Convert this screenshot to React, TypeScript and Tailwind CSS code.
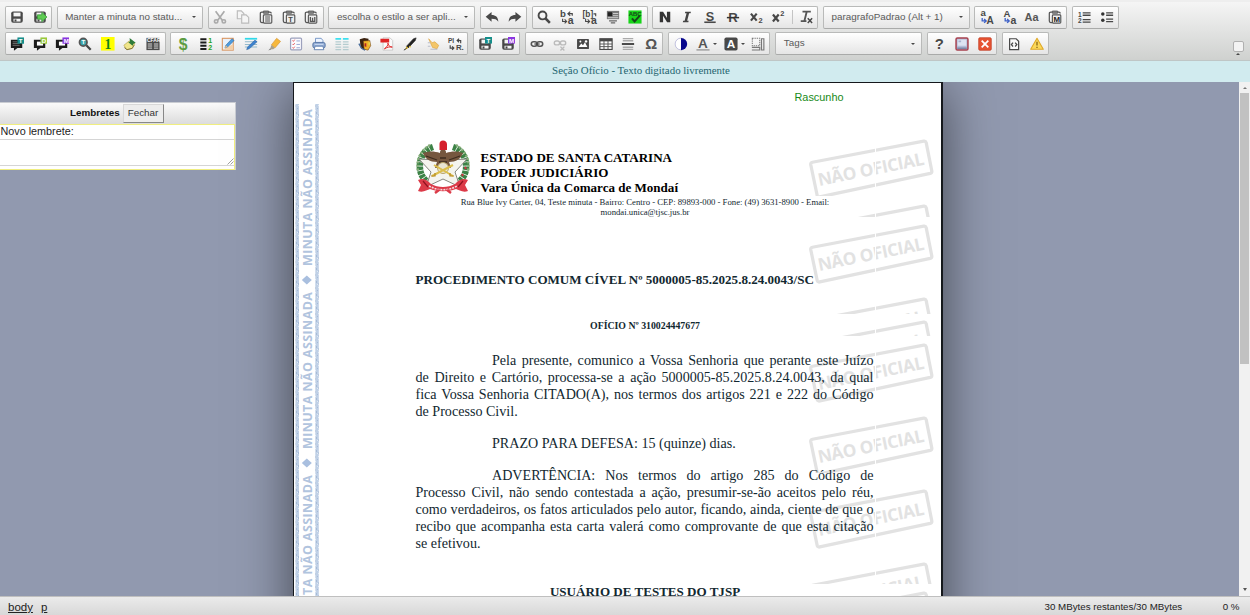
import React from "react";

type Kids = { children?: React.ReactNode };

const Icon = ({ children }: Kids) => (
  <svg viewBox="0 0 16 16" className="h-3.5 w-3.5 shrink-0 overflow-visible" fill="none">
    {children}
  </svg>
);

const T = ({ x, y, s = 9, f = "#484848", serif, children }: Kids & { x: number; y: number; s?: number; f?: string; serif?: boolean }) => (
  <text x={x} y={y} fontSize={s} fill={f} fontWeight="bold" fontFamily={serif ? "Liberation Serif, serif" : "Liberation Sans, sans-serif"}>
    {children}
  </text>
);

const Floppy = () => (
  <>
    <rect x="1.4" y="1.6" width="13.2" height="13" rx="2.2" fill="#484848" />
    <path d="M4 3h8v4.3H4z" fill="#f4f4f4" />
    <path d="M4 10h8v3.2H4z" fill="#f4f4f4" />
    <path d="M5.2 10.8h2.2v2.4H5.200z" fill="#484848" />
  </>
);

const Board = ({ children }: Kids) => (
  <>
    <path d="M5 2.5H3.2Q1.500 2.500 1.500 4v8.700q0 1.600 1.600 1.600H5M11 2.500h1.500Q14 2.500 14 4" stroke="#555" strokeWidth="1.400" />
    <path d="M5 1.200h6v2.500H5z" stroke="#555" fill="#888" />
    <rect x="5" y="5.500" width="9.600" height="9.500" rx="1" stroke="#555" strokeWidth="1.300" fill="#eee" />
    {children}
  </>
);

const Speech = ({ c, l, solid }: { c: string; l: string; solid?: boolean }) => (
  <>
    <path d="M1 3h13v9.500H8.500L4.500 15.800v-3.300H1z" fill="#1c1c1c" />
    {solid ? <path d="M3 5.500h5M3 7.500h8M3 9.500h8" stroke="#777" /> : <path d="M4.500 5.300h7v4.500h-7z" fill="#fff" />}
    <rect x="8.500" y="0.500" width="7.500" height="7.200" fill={c} />
    <T x={9.900} y={6.800} s={7} f="#fff">{l}</T>
  </>
);

const Swap = ({ a, b }: { a: string; b: string }) => (
  <>
    <T x={0} y={8.500} s={11}>{a}</T>
    <T x={8.800} y={15.500} s={12}>{b}</T>
    <path d="M14 6.500V4.200H9.500M11.700 1.800L9 4.200l2.700 2.400" stroke="#484848" strokeWidth="1.300" />
    <path d="M3 10v3.200h4M5.300 10.800l2.200 2.200-2.200 2.200" stroke="#484848" strokeWidth="1.300" />
  </>
);

const BlueArrow = () => <path d="M2.500 9v3.500h4M4.700 10.300l2.400 2.200-2.400 2.200" stroke="#3f62c8" strokeWidth="1.500" />;

const icons: Record<string, React.ReactNode> = {
  save: <Floppy />,
  saveExit: (
    <>
      <Floppy />
      <path d="M5 5.500h5V2.500l6 5.500-6 5.500v-3H5z" fill="#5ecb52" stroke="#319233" strokeWidth="0.800" />
    </>
  ),
  cut: (
    <g stroke="#aaa" strokeWidth="1.900">
      <path d="M3 1.500l7.800 10.500M13 1.500L5.200 12" />
      <circle cx="3.600" cy="13" r="1.900" />
      <circle cx="12.400" cy="13" r="1.900" />
    </g>
  ),
  copy: (
    <g stroke="#bbb" strokeWidth="1.300" fill="#f5f5f5">
      <path d="M1.500 1H6l3 3v6H1.500z" />
      <path d="M6.500 5.500H11.500l3 3V15h-8z" />
    </g>
  ),
  paste: <Board><path d="M7 8h5.700M7 10.300h5.700M7 12.600h5.700" stroke="#555" strokeWidth="1.200" /></Board>,
  pasteText: <Board><T x={7.100} y={13.500} s={8.500}>T</T></Board>,
  pasteWord: <Board><path d="M7.300 8v5h5V8M9.800 8.800v3.600" stroke="#555" strokeWidth="1.500" /></Board>,
  undo: <path d="M0.800 7.800L7.500 2.200v3.500c4.700.1 7.500 2.200 7.700 7.700-1.800-2.700-3.900-3.400-7.700-3.400v3.500z" fill="#484848" />,
  redo: <path d="M15.200 7.800L8.500 2.200v3.500C3.800 5.800 1 7.900.8 13.400c1.800-2.700 3.900-3.400 7.700-3.400v3.500z" fill="#484848" />,
  find: (
    <>
      <circle cx="6.300" cy="6.200" r="4.500" stroke="#484848" strokeWidth="2.200" />
      <path d="M9.800 9.700l4.900 4.900" stroke="#484848" strokeWidth="2.900" />
    </>
  ),
  replace: <Swap a="b" b="a" />,
  replaceAll: (
    <>
      <T x={-0.500} y={8.500} s={9.500}>[b]</T>
      <T x={9} y={15.500} s={12}>a</T>
      <path d="M3 10v3.200h4M5.300 10.800l2.200 2.200-2.200 2.200M14.500 7V4.500H12" stroke="#484848" strokeWidth="1.300" />
    </>
  ),
  selectAll: (
    <>
      <path d="M1 1h14v9.500H1z" fill="#777" />
      <path d="M2 2.500h5v4.500H2z" fill="#222" />
      <path d="M8 4h6M8 6.500h6M2 8.800h12" stroke="#eee" strokeWidth="0.800" />
      <path d="M3.500 12.500h9M5.500 14.700h5" stroke="#666" strokeWidth="1.300" />
    </>
  ),
  spell: (
    <>
      <rect x="0.500" y="0.500" width="15" height="15" fill="#17d419" />
      <T x={0.900} y={7} s={6.800} f="#17461b">ABC</T>
      <path d="M4.500 9.500l3 3.500 6-6.500" stroke="#17461b" strokeWidth="2.300" />
    </>
  ),
  bold: <path d="M2 14V2h3.800l4.400 7.200V2H14v12h-3.600L5.800 6.700V14z" fill="#333" />,
  italic: <path d="M6 2h6.500l-.4 1.700h-1.700L8.200 12.300h1.700L9.500 14H3.200l.4-1.700h1.700l2.200-8.600H5.600z" fill="#444" />,
  underline: (
    <>
      <T x={3} y={12} s={14.500}>S</T>
      <path d="M1.500 14h13" stroke="#484848" strokeWidth="1.800" />
    </>
  ),
  strike: (
    <>
      <T x={2.700} y={13.700} s={15}>R</T>
      <path d="M1 8.700h14" stroke="#333" strokeWidth="1.700" />
    </>
  ),
  sub: (
    <>
      <path d="M2.200 4.200l6.600 8M8.800 4.200l-6.600 8" stroke="#484848" strokeWidth="2.500" />
      <T x={10.800} y={15} s={8.500}>2</T>
    </>
  ),
  sup: (
    <>
      <path d="M2.200 5.200l6.600 8M8.800 5.200l-6.600 8" stroke="#484848" strokeWidth="2.500" />
      <T x={10.500} y={7} s={8.500}>2</T>
    </>
  ),
  clear: (
    <>
      <path d="M4 1.800h9.500M8.800 2L6.300 12M2 12.800h6.500" stroke="#555" strokeWidth="2.100" />
      <path d="M10 9.500l5 5.300M15 9.500l-5 5.300" stroke="#484848" strokeWidth="1.700" />
    </>
  ),
  lowUp: <><T x={0.500} y={7} s={11}>a</T><T x={7.500} y={15.500} s={11.500}>A</T><BlueArrow /></>,
  upLow: <><T x={0.500} y={8} s={11}>A</T><T x={8.500} y={15.500} s={12}>a</T><BlueArrow /></>,
  cap: <T x={-0.500} y={12} s={12.500} f="#555">Aa</T>,
  pasteM: <Board><T x={6.200} y={13.700} s={9} f="#222">M</T></Board>,
  ol: (
    <>
      <T x={1} y={7.500} s={7.500}>1</T>
      <T x={1} y={15.300} s={7.500}>2</T>
      <path d="M6.500 3.200h9M6.500 6h9M6.500 11h9M6.500 13.800h9" stroke="#484848" strokeWidth="1.500" />
    </>
  ),
  ul: (
    <>
      <circle cx="3.200" cy="4.500" r="2" fill="#333" />
      <circle cx="3.200" cy="11.700" r="2" fill="#333" />
      <path d="M7 3.300h8M7 6h8M7 10.500h8M7 13.200h8" stroke="#484848" strokeWidth="1.500" />
    </>
  ),
  noteT: <Speech c="#168e8a" l="T" solid />,
  noteD: <Speech c="#98c93c" l="D" />,
  noteM: <Speech c="#8a35e0" l="M" />,
  lens: (
    <>
      <circle cx="6" cy="6" r="4.300" fill="#3aa6ad" stroke="#555" strokeWidth="2" />
      <path d="M9.500 9.500l5 5" stroke="#444" strokeWidth="2.600" />
      <T x={4} y={8.500} s={7} f="#fff">T</T>
    </>
  ),
  one: <><rect width="15.500" height="15.500" fill="#ff0" /><T x={4} y={13.700} s={15.500} f="#13851a" serif>1</T></>,
  pin: (
    <>
      <path d="M1 9.500L7 4.500l6.500 2.500-3 6L4.500 14.500z" fill="#f0e58a" stroke="#b8a64a" strokeWidth="0.800" />
      <path d="M1.500 12l3 2.500 6-1.500 2.500-4" stroke="#7a6b30" />
      <path d="M7.500 1l7 5.500-2.500 1.200-1 2.300L6 6l2-1z" fill="#2d7a3a" />
    </>
  ),
  card: (
    <>
      <path d="M0.500 1h15v14h-15z" fill="#4a4a4a" />
      <T x={1} y={6} s={5.800} f="#fff">CFAR</T>
      <path d="M2 8h5M2 10.300h5M2 12.700h5M9 8h5M9 10.300h5M9 12.700h5" stroke="#ddd" strokeWidth="1.100" />
    </>
  ),
  money: <T x={3} y={14.300} s={18} f="#5d9c43">$</T>,
  nums: (
    <>
      <path d="M1.500 1.500h7v2.200h-7zM1.500 5.200h7v2.200h-7zM1.500 8.900h7v2.200h-7zM1.500 12.600h7v2.200h-7z" fill="#1c1c1c" />
      <T x={10.500} y={7} s={8} f="#23a321">1</T>
      <T x={10.500} y={15} s={8} f="#23a321">2</T>
    </>
  ),
  edit: (
    <>
      <rect x="1.500" y="1.500" width="12.500" height="13.500" fill="#e8f1fa" stroke="#d9935c" strokeWidth="1.200" />
      <path d="M2 14.500h12V8z" fill="#f3cfa8" />
      <path d="M4.500 12.500l1-3 7-7.500 2.500 2-7.500 7.500z" fill="#4b9be0" stroke="#2b5f94" strokeWidth="0.600" />
      <path d="M4.500 12.500l1-3 2 2z" fill="#f3c080" />
    </>
  ),
  editLines: (
    <>
      <path d="M1 2h14" stroke="#30d8e8" strokeWidth="2" />
      <path d="M1 5.500h14M1 8.500h14M1 11.500h14" stroke="#92b9cc" strokeWidth="1.200" />
      <path d="M3 14.500l1-3 8.500-8 2.500 2-9 8z" fill="#3c82cf" stroke="#2b5f94" strokeWidth="0.500" />
    </>
  ),
  marker: (
    <>
      <path d="M5 9l6-7.500 4.500 3.500-6.500 7.500z" fill="#f6b83c" stroke="#d29331" strokeWidth="0.700" />
      <path d="M5 9l4 3.500-2 1.500H3.500z" fill="#a8a08c" />
      <path d="M3.500 13l1.500 1-3.500 1.500z" fill="#777" />
    </>
  ),
  checks: (
    <>
      <rect x="1.800" y="1.200" width="12.500" height="13.500" rx="1.200" fill="#fbfbff" stroke="#9ca1bd" strokeWidth="1.400" />
      <path d="M4 4l1 1 1.500-2M4 8l1 1 1.500-2M4 12l1 1 1.500-2" stroke="#e0474b" />
      <path d="M8.500 4.500h4M8.500 8.500h4M8.500 12.300h4" stroke="#8c9cce" />
    </>
  ),
  print: (
    <>
      <path d="M4 6V1.500h6.500L12.500 4v3" fill="#eef5ff" stroke="#6d8fc2" />
      <rect x="1" y="6.200" width="14" height="6.300" rx="2" fill="#93acd4" stroke="#4c6d9f" />
      <path d="M3.500 10.500h9l1 4h-11z" fill="#fff" stroke="#5a7cad" />
      <path d="M3 8.500h10" stroke="#cfdff5" />
    </>
  ),
  columns: (
    <>
      <path d="M0.500 2h6.500M9 2h6.500" stroke="#3de0ef" strokeWidth="2" />
      <path d="M0.500 5.500h6.500M9 5.500h6.500M0.500 8.500h6.500M9 8.500h6.500M0.500 11.500h6.500M9 11.500h6.500M0.500 14.500h6.500M9 14.500h6.500" stroke="#b4cccf" strokeWidth="1.300" />
    </>
  ),
  mask: (
    <>
      <path d="M2 2.500l5-1.500 5 1v10l-5 3-4-3z" fill="#3b2310" />
      <path d="M6 4.500l7.500-.5 1 6-3 5-4.500-1z" fill="#f0b32a" stroke="#5d3414" strokeWidth="0.600" />
      <path d="M7.500 7h2v4.500l-2-1z" fill="#b32222" />
      <path d="M12 6h1.800v3H12z" fill="#e4d94a" />
      <path d="M1 7.500l3 5.500 4 2" stroke="#4a6d9b" strokeWidth="1.500" />
    </>
  ),
  pdf: (
    <>
      <path d="M3.500 1h8l3 3v11h-11z" fill="#fafafa" stroke="#bbb" strokeWidth="0.800" />
      <rect x="0.500" y="2" width="10" height="4.300" fill="#df2527" />
      <path d="M5 13.500c3-2 4.500-4.500 4-6.500 1 3.500 2.500 4.500 5 4.500-3-.7-6 .3-9 2z" stroke="#df2527" strokeWidth="1.100" />
    </>
  ),
  pen: (
    <>
      <path d="M4 10.500l8-8.500 3-1-1 3-8 8.500z" fill="#222" stroke="#222" strokeWidth="0.700" />
      <path d="M4 10.500l2 2-3.500 2z" fill="#d6ad1a" />
      <path d="M7 10.500l2 1" stroke="#e4c12f" strokeWidth="1.200" />
      <path d="M1 15l3-2" stroke="#222" />
    </>
  ),
  hand: (
    <>
      <path d="M3 2l4 4.500 3-1 4.500 4-2 4-5-1.500z" fill="#f3c66a" stroke="#dba03a" strokeWidth="0.700" />
      <path d="M2 6.500h3M2 10.500h3M5 14h8" stroke="#b9bdc9" strokeWidth="1.200" />
    </>
  ),
  pr: (
    <>
      <T x={0} y={7} s={7.500}>PI</T>
      <T x={9} y={15.300} s={9}>R.</T>
      <path d="M14.500 7V4H11M2.500 9.500v3.200h4M4.700 10.700l2 2-2 2M12.700 2L10.500 4l2.200 2" stroke="#444" strokeWidth="1.300" />
    </>
  ),
  saveT: <><Floppy /><rect x="8" y="0" width="8" height="7.500" fill="#168e8a" /><T x={9.800} y={6.500} s={7} f="#fff">T</T></>,
  saveM: <><Floppy /><rect x="8" y="0" width="8" height="7.500" fill="#8a35e0" /><T x={9.200} y={6.500} s={7} f="#fff">M</T></>,
  link: (
    <>
      <rect x="1.500" y="5.500" width="6.500" height="5" rx="2.500" stroke="#555" strokeWidth="1.800" />
      <rect x="8" y="5.500" width="6.500" height="5" rx="2.500" stroke="#555" strokeWidth="1.800" />
      <path d="M5 8h6" stroke="#444" strokeWidth="1.400" />
    </>
  ),
  unlink: (
    <g stroke="#bbb" strokeWidth="1.600">
      <rect x="1.500" y="4.500" width="6" height="4.500" rx="2.200" />
      <rect x="8.500" y="4.500" width="6" height="4.500" rx="2.200" />
      <path d="M8.500 11l4.500 4.500M13 11l-4.500 4.500" />
    </g>
  ),
  image: (
    <>
      <rect x="1.200" y="2.200" width="13.600" height="11.600" rx="1" fill="#484848" />
      <path d="M3 11.500l3-4 2 2 2.200-3.500L13 11.500z" fill="#fff" />
      <circle cx="5" cy="5.200" r="1.100" fill="#fff" />
      <circle cx="11.500" cy="5" r="1.400" fill="#fff" />
    </>
  ),
  table: (
    <>
      <rect x="1" y="2" width="14" height="12.200" fill="#fff" stroke="#484848" strokeWidth="1.300" />
      <path d="M1 2h14v3H1z" fill="#484848" />
      <path d="M1 8h14M1 11h14M5.700 4v10M10.300 4v10" stroke="#555" strokeWidth="1.100" />
    </>
  ),
  rule: (
    <>
      <path d="M2 1.800h12M2 4.300h12M2 11.700h12M2 14.200h12" stroke="#aaa" strokeWidth="1.500" />
      <path d="M1 8h14" stroke="#333" strokeWidth="2" />
    </>
  ),
  omega: <T x={1.500} y={14} s={17} f="#555">Ω</T>,
  contrast: (
    <>
      <circle cx="8" cy="8" r="6.700" fill="#fff" stroke="#9c9ccc" strokeWidth="0.700" />
      <path d="M8 1a7 7 0 010 14z" fill="#07078c" />
    </>
  ),
  color: <><T x={2.300} y={12} s={15.500} f="#555">A</T><path d="M0.500 14.700h15" stroke="#aaa" strokeWidth="2" /></>,
  bgColor: <><rect x="0.500" y="0.500" width="15" height="15" rx="2" fill="#484848" /><T x={3.200} y={12.900} s={13.500} f="#fff">A</T></>,
  blocks: (
    <>
      <rect x="1.500" y="1.500" width="8.500" height="8.500" stroke="#777" strokeWidth="1.200" strokeDasharray="1.500 1" />
      <path d="M1 11.800h9v3H1M12 2h2.700v12.800H12z" stroke="#777" strokeWidth="1.300" />
    </>
  ),
  help: <T x={3} y={14} s={17}>?</T>,
  preview: (
    <>
      <rect x="1.200" y="1.200" width="13.600" height="13.600" rx="1.500" fill="#b4bdd8" stroke="#a8404e" strokeWidth="1.700" />
      <path d="M3 3h10v7H3z" fill="#dde3f2" />
      <path d="M2.500 12.800h11" stroke="#75809f" strokeWidth="1.500" />
      <path d="M4 4h3v2H4z" fill="#a8b3d0" />
    </>
  ),
  close: (
    <>
      <rect x="0.800" y="0.800" width="14.400" height="14.400" rx="1.500" fill="#e65332" stroke="#c23c22" strokeWidth="0.800" />
      <path d="M4.200 4.200l7.600 7.600M11.800 4.200l-7.600 7.600" stroke="#fff" strokeWidth="2" />
    </>
  ),
  source: (
    <>
      <path d="M3 2h7.500l2.800 2.800V14.500H3z" stroke="#484848" strokeWidth="1.400" fill="#fafafa" />
      <path d="M6.900 6.500L5 8.700l1.900 2.200M9.300 6.500l1.900 2.200-1.900 2.200" stroke="#484848" strokeWidth="1.500" />
    </>
  ),
  warn: (
    <>
      <path d="M8 1.500L15.200 14H.8z" fill="#fbd85a" stroke="#dfa827" strokeWidth="1.200" strokeLinejoin="round" />
      <path d="M8 5.500v4.300M8 11v1.600" stroke="#8a6818" strokeWidth="1.500" />
    </>
  ),
};

const Caret = () => <span className="h-0 w-0 shrink-0 border-x-2 border-t-2 border-x-transparent border-t-[#474747]" />;

const box = "flex h-full shrink-0 items-center rounded-[2px] border border-[#b9bab9] border-b-[#a9aaa9] bg-linear-to-b from-white to-[#e5e5e5]";

const Group = ({ names }: { names: string[] }) => (
  <div className={box}>
    {names.map((n) =>
      n === "|" ? (
        <span key={n} className="mx-[2px] h-3.5 w-px bg-[#c4c4c4]" />
      ) : (
        <button
          key={n}
          aria-label={n}
          className={n === "color" || n === "bgColor" ? "flex w-[27.400px] items-center gap-[3px] pl-[4.500px]" : "flex w-[22.720px] justify-center"}
        >
          <Icon>{icons[n]}</Icon>
          {(n === "color" || n === "bgColor") && <Caret />}
        </button>
      ),
    )}
  </div>
);

const Combo = ({ label }: { label: string }) => (
  <div className={box + " w-[146.800px] justify-between pr-[6px] pl-[7.500px] text-[9.850px] whitespace-nowrap text-[#5a5a5a]"}>
    <span>{label}</span>
    <Caret />
  </div>
);

const Stamp = ({ top, h }: { top: number; h: number }) => (
  <svg className="absolute left-[514px] w-[128px]" style={{ top, height: h }} viewBox={`0 0 128 ${h}`}>
    <path transform="scale(0.985 0.990)" d="M4.500 23.500L117.500 2.200q2-.3 2.500 1.500l5.700 28.600q.3 2-1.600 2.500L12 58.500q-2.200.4-2.700-1.500L2.800 26q-.3-2 1.700-2.500z" fill="none" stroke="#e2e2e2" strokeWidth="3.300" />
    <text transform="translate(11.200 47) rotate(-11.500)" fontFamily="Open Sans, sans-serif" fontWeight="bold" fontSize="17.300" fill="#e2e2e2" textLength="108" lengthAdjust="spacing">
      NÃO OFICIAL
    </text>
    <path d="M67.500 0v60" stroke="#fff" strokeWidth="1" />
  </svg>
);

const stamps = [
  [139, 57], [204, 13], [224, 61], [297, 17], [320, 16], [342.700, 61], [416, 57], [489, 61], [562, 22], [591, 5],
];

const SideBand = () => (
  <svg className="absolute top-[21px] left-px h-[493px] w-[26px]" viewBox="0 0 26 493">
    <defs>
      <pattern id="grain" width="4" height="13" patternUnits="userSpaceOnUse">
        <rect width="4" height="13" fill="#bfd0e6" />
        <path d="M0 1h1v2H0zM2 4h1v1H2zM1 8h1v2H1zM3 10h1v2H3z" fill="#a6bad6" />
        <path d="M3 1h1v1H3zM0 6h1v1H0zM2 11h1v1H2z" fill="#e2eaf3" />
      </pattern>
    </defs>
    <rect x="0.500" width="3.500" height="493" fill="url(#grain)" />
    <rect x="20.300" width="3.500" height="493" fill="url(#grain)" />
    {[0, 183, 366].map((y) => (
      <g key={y} transform={`translate(0 ${y})`}>
        <text transform="translate(16.500 162) rotate(-90)" fontFamily="Open Sans, sans-serif" fontWeight="bold" fontSize="12.500" fill="#b1c4de" textLength="157">
          MINUTA NÃO ASSINADA
        </text>
        <path d="M11.800 171.500l5 4.500-5 4.500-5-4.500z" fill="#a9bfdf" />
      </g>
    ))}
  </svg>
);

const Crest = () => (
  <svg viewBox="0 0 54 54" className="h-[54px] w-[54px] shrink-0" fill="none">
    <path d="M17 7C8 10 3 18 4 29c1 7 4 10 8 14M37 7c9 3 14 11 13 22-1 7-4 10-8 14" stroke="#3c8246" strokeWidth="6.500" strokeDasharray="3.500 0.700" />
    <path d="M14 5C4 11 0 20 2 31M40 5c10 6 14 15 12 26" stroke="#86ad78" strokeWidth="2.400" strokeDasharray="2 1.500" />
    <path d="M46 21l1 2M49 27l1 2M46 34l1 2M42 12l1 2" stroke="#cf3340" strokeWidth="2" />
    <path d="M27 7l6 13 18-1-12 13 5 15-17-8-17 8 5-15L3 19l18 1z" fill="#f4f4ee" stroke="#85877f" strokeWidth="1" />
    <path d="M27 9c-2 0-3 2-3 4-6-2-11-2-17 0 2 6 7 9 14 9l-2 6h16l-2-6c7 0 12-3 14-9-6-2-11-2-17 0 0-2-1-4-3-4z" fill="#76573f" />
    <path d="M10 16l11 4M44 16l-11 4M24 18h6M23 22h8" stroke="#3e2d20" strokeWidth="1.300" />
    <path d="M23.500 10V4q0-3.500 3.500-3.500T31 4v6z" fill="#d51f2c" />
    <circle cx="27" cy="28" r="5.500" fill="#e9e5d2" stroke="#b9a468" />
    <path d="M16 36l21-11M18 25l19 11" stroke="#dcbf4c" strokeWidth="2" />
    <path d="M15 36h4v-3M38 36h-4v-3" stroke="#b58a20" strokeWidth="1.200" />
    <path d="M2 40c6-3 10 1 13 4 7 4 17 4 24 0 3-3 7-7 13-4l-3 5 3 6c-5 2-9-1-12-2-8 3-18 3-26 0-3 1-7 4-12 2l3-6z" fill="#dc3a48" />
    <path d="M13 46c9 5 19 5 28 0" stroke="#f6dadd" strokeWidth="1.600" strokeDasharray="2 1" />
    <path d="M7 41l5 6M47 41l-5 6" stroke="#8f1420" strokeWidth="1.200" />
    <path d="M23 50l-4 3M31 50l4 3" stroke="#dc3a48" strokeWidth="2.400" />
  </svg>
);

const Lines = ({ lines }: { lines: string[] }) => (
  <p>
    {lines.map((l, i) => (
      <span
        key={l}
        className={
          "block h-[17px] whitespace-nowrap " +
          (i === 0 ? "pl-[76.500px] " : "") +
          (i < lines.length - 1 ? "[text-align-last:justify]" : "")
        }
      >
        {l}
      </span>
    ))}
  </p>
);

export default function App() {
  return (
    <div className="flex h-[615px] w-[1250px] flex-col overflow-hidden bg-[#9199af] font-['Liberation_Sans',Arial,sans-serif]">
      <header className="flex h-[61px] shrink-0 justify-between border-t-2 border-b border-t-[#eeeeee] border-b-[#bfc6c6] bg-linear-to-b from-[#f5f5f5] to-[#cfd1cf] pt-[4px] pr-[6.500px] pl-[4.500px]">
        <div className="flex flex-col gap-[3.800px]">
          <div className="flex h-[22.700px] gap-[4.700px]">
            <Group names={["save", "saveExit"]} />
            <Combo label="Manter a minuta no statu..." />
            <Group names={["cut", "copy", "paste", "pasteText", "pasteWord"]} />
            <Combo label="escolha o estilo a ser apli..." />
            <Group names={["undo", "redo"]} />
            <Group names={["find", "replace", "replaceAll", "selectAll", "spell"]} />
            <Group names={["bold", "italic", "underline", "strike", "sub", "sup", "|", "clear"]} />
            <Combo label="paragrafoPadrao (Alt + 1)" />
            <Group names={["lowUp", "upLow", "cap", "pasteM"]} />
            <Group names={["ol", "ul"]} />
          </div>
          <div className="flex h-[22.700px] gap-[4.900px]">
            <Group names={["noteT", "noteD", "noteM", "lens", "one", "pin", "card"]} />
            <Group names={["money", "nums", "edit", "editLines", "marker", "checks", "print", "columns", "mask", "pdf", "pen", "hand", "pr"]} />
            <Group names={["saveT", "saveM"]} />
            <Group names={["link", "unlink", "image", "table", "rule", "omega"]} />
            <Group names={["contrast", "color", "bgColor", "blocks"]} />
            <Combo label="Tags" />
            <Group names={["help", "preview", "close"]} />
            <Group names={["source", "warn"]} />
          </div>
        </div>
        <div className="mt-[35px] flex h-[15px] flex-col items-center gap-[1.500px]">
          <span className="h-[10.500px] w-[11px] rounded-[2px] border border-[#b0b0b0] bg-[#f3f3f3]" />
          <span className="h-0 w-0 border-x-2 border-b-2 border-x-transparent border-b-[#474747]" />
        </div>
      </header>

      <div className="flex h-[21px] shrink-0 items-center justify-center bg-[#d1ebef] pl-[32px] font-['Liberation_Serif',serif] text-[10.900px] text-[#1f6570]">
        <span className="pb-[2px]">Seção Ofício - Texto digitado livremente</span>
      </div>

      <main className="flex h-[514px] shrink-0 overflow-hidden">
        <aside className="w-[293px] shrink-0 pt-5">
          <div className="h-[68px] w-[236px] border border-l-0 border-[#c9ccd2] bg-white">
            <div className="flex h-[21px] items-center bg-linear-to-b from-[#fafafa] to-[#dcdcdc] pl-[70px] text-[9.850px]">
              <b className="w-[52.500px] text-[#111]">Lembretes</b>
              <button className="h-[19px] w-[41px] border border-t-[#d8d8d8] border-r-[#888] border-b-[#888] border-l-[#d8d8d8] bg-[#ededed] text-[#333]">Fechar</button>
            </div>
            <div className="h-[45.500px] border-t border-r border-b border-[#f0ee80]">
              <label className="block h-[13.500px] pl-[0.500px] text-[10.800px] leading-[12px] text-[#222]">Novo lembrete:</label>
              <div className="flex h-[27.500px] items-end justify-end border-y border-[#d5d5d5]">
                <svg viewBox="0 0 7 7" className="h-[7px] w-[7px]"><path d="M0.500 6.500l6-6M3.500 6.500l3-3" stroke="#888" strokeWidth="0.800" /></svg>
              </div>
            </div>
          </div>
        </aside>

        <article className="relative h-[700px] w-[650px] shrink-0 border border-r-2 border-[#15181c] bg-white px-[121.500px] pt-[7px] font-['Liberation_Serif','Times_New_Roman',serif] text-[#122830] shadow-[0_8px_50px_rgba(0,0,0,0.550)]">
          <SideBand />
          {stamps.map(([y, h]) => (
            <Stamp key={y} top={y - 83} h={h} />
          ))}
          <div className="relative w-[458px]">
            <div className="h-[14px] pl-[379px] font-['Liberation_Sans',sans-serif] text-[10.900px] leading-[14px] text-[#188a18]">Rascunho</div>
            <div className="mt-9 flex h-[55px] gap-[11px]">
              <Crest />
              <div className="pt-[10px] text-[13.050px] leading-[15px] font-bold whitespace-nowrap text-black">
                <div>ESTADO DE SANTA CATARINA</div>
                <div>PODER JUDICIÁRIO</div>
                <div>Vara Única da Comarca de Mondaí</div>
              </div>
            </div>
            <div className="mt-[3px] pl-px text-center text-[8.700px] leading-[9.500px] whitespace-nowrap">
              <div>Rua Blue Ivy Carter, 04, Teste minuta - Bairro: Centro - CEP: 89893-000 - Fone: (49) 3631-8900 - Email:</div>
              <div>mondai.unica@tjsc.jus.br</div>
            </div>
            <h1 className="mt-[55px] text-[13.050px] leading-[15px] font-bold whitespace-nowrap">PROCEDIMENTO COMUM CÍVEL Nº 5000005-85.2025.8.24.0043/SC</h1>
            <h2 className="mt-[32px] pl-px text-center text-[9.800px] leading-[14px] font-bold">OFÍCIO Nº 310024447677</h2>
            <div className="mt-[19px] flex flex-col gap-[15.200px] text-[14.100px] leading-[17px]">
              <Lines
                lines={[
                  "Pela presente, comunico a Vossa Senhoria que perante este Juízo",
                  "de Direito e Cartório, processa-se a ação 5000005-85.2025.8.24.0043, da qual",
                  "fica Vossa Senhoria CITADO(A), nos termos dos artigos 221 e 222 do Código",
                  "de Processo Civil.",
                ]}
              />
              <Lines lines={["PRAZO PARA DEFESA: 15 (quinze) dias."]} />
              <Lines
                lines={[
                  "ADVERTÊNCIA: Nos termos do artigo 285 do Código de",
                  "Processo Civil, não sendo contestada a ação, presumir-se-ão aceitos pelo réu,",
                  "como verdadeiros, os fatos articulados pelo autor, ficando, ainda, ciente de que o",
                  "recibo que acompanha esta carta valerá como comprovante de que esta citação",
                  "se efetivou.",
                ]}
              />
            </div>
            <div className="mt-8 pl-px text-center text-[13.050px] leading-[15px] font-bold">USUÁRIO DE TESTES DO TJSP</div>
          </div>
        </article>

        <div className="flex-1" />
        <div className="relative z-10 flex w-[11px] shrink-0 flex-col items-center bg-[#f1f1f1] py-[5px]">
          <span className="h-0 w-0 border-x-2 border-b-2 border-x-transparent border-b-[#777]" />
          <span className="mt-[4px] h-[271px] w-[9px] bg-[#c1c1c1]" />
          <span className="mt-auto h-0 w-0 border-x-[2.500px] border-t-[3px] border-x-transparent border-t-[#555]" />
        </div>
      </main>

      <footer className="flex h-[19px] shrink-0 items-center justify-between border-t border-[#bfbfbf] bg-linear-to-b from-[#ebebeb] to-[#d8d8d8] pt-[3px] pr-[10.500px] pl-[8px] text-[9.750px] text-[#222]">
        <div className="flex gap-[8px] text-[11.500px] underline">
          <span>body</span>
          <span>p</span>
        </div>
        <div className="flex gap-[40.500px]">
          <span>30 MBytes restantes/30 MBytes</span>
          <span>0 %</span>
        </div>
      </footer>
    </div>
  );
}
